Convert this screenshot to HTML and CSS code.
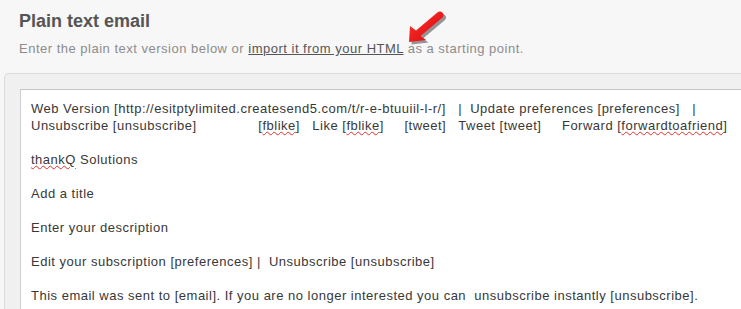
FILE: index.html
```html
<!DOCTYPE html>
<html>
<head>
<meta charset="utf-8">
<link rel="stylesheet" href="styles.css">
</head>
<body>
<div class="page">
  <header class="head">
    <h1 class="title">Plain text email</h1>
    <p class="sub">Enter the plain text version below or <a class="link" href="#">import it from your HTML</a> as a starting point.</p>
    <svg class="arrow" width="60" height="50" viewBox="0 0 60 50">
      <defs>
        <linearGradient id="ag" x1="0" y1="0" x2="1" y2="1">
          <stop offset="0" stop-color="#ff3b2e"/>
          <stop offset="1" stop-color="#d8000c"/>
        </linearGradient>
      </defs>
      <path transform="translate(2.5,2.5)" d="M14 18 L20 22.5 L42 4 A3.6 3.6 0 0 1 46.5 9.5 L24.5 28 L30 32 L13 34 Z" fill="#000" opacity="0.4"/>
      <path d="M14 18 L20 22.5 L42 4 A3.6 3.6 0 0 1 46.5 9.5 L24.5 28 L30 32 L13 34 Z" fill="url(#ag)"/>
    </svg>
  </header>
  <section class="panel">
    <div class="editor">
<pre class="txt">Web Version [http://esitptylimited.createsend5.com/t/r-e-btuuiil-l-r/]   |  Update preferences [preferences]   |
Unsubscribe [unsubscribe]               [<span class="sp">fblike</span>]   Like [<span class="sp">fblike</span>]     [tweet]   Tweet [tweet]     Forward [<span class="sp">forwardtoafriend</span>]

<span class="sp">thankQ</span> Solutions

Add a title

Enter your description

Edit your subscription [preferences] |  Unsubscribe [unsubscribe]

This email was sent to [email]. If you are no longer interested you can  unsubscribe instantly [unsubscribe].</pre>
    </div>
  </section>
</div>
</body>
</html>
```

FILE: styles.css
```css
html, body {
  margin: 0;
  padding: 0;
  background: #f7f7f7;
  overflow: hidden;
}
.page {
  width: 741px;
  height: 309px;
  overflow: hidden;
  font-family: "Liberation Sans", Arial, sans-serif;
}
.head {
  position: relative;
  padding: 10px 0 0 19px;
  height: 63px;
  box-sizing: border-box;
}
.title {
  margin: 0;
  font-size: 18px;
  line-height: 22px;
  font-weight: bold;
  color: #555;
}
.sub {
  margin: 8px 0 0 0;
  font-size: 13px;
  line-height: 18px;
  letter-spacing: 0.5px;
  color: #8c8c8c;
}
.link {
  color: #555;
  text-decoration: underline;
}
.arrow {
  position: absolute;
  left: 396px;
  top: 8px;
}
.panel {
  margin-left: 4px;
  margin-top: 10px;
  background: #f0f0f0;
  border: 1px solid #dcdcdc;
  border-right: none;
  border-radius: 5px 0 0 0;
  padding: 15px 0 0 15px;
  height: 300px;
}
.editor {
  background: #fff;
  border: 1px solid #cfcfcf;
  border-top-color: #c4c4c4;
  border-right: none;
  padding: 10px 0 0 10px;
  height: 300px;
}
.txt {
  margin: 0;
  font-family: "Liberation Sans", Arial, sans-serif;
  font-size: 13px;
  line-height: 17px;
  letter-spacing: 0.5px;
  color: #383838;
  white-space: pre;
}
.sp {
  text-decoration: underline wavy #e0302a;
  text-decoration-thickness: 1px;
  text-underline-offset: 1px;
}
```
